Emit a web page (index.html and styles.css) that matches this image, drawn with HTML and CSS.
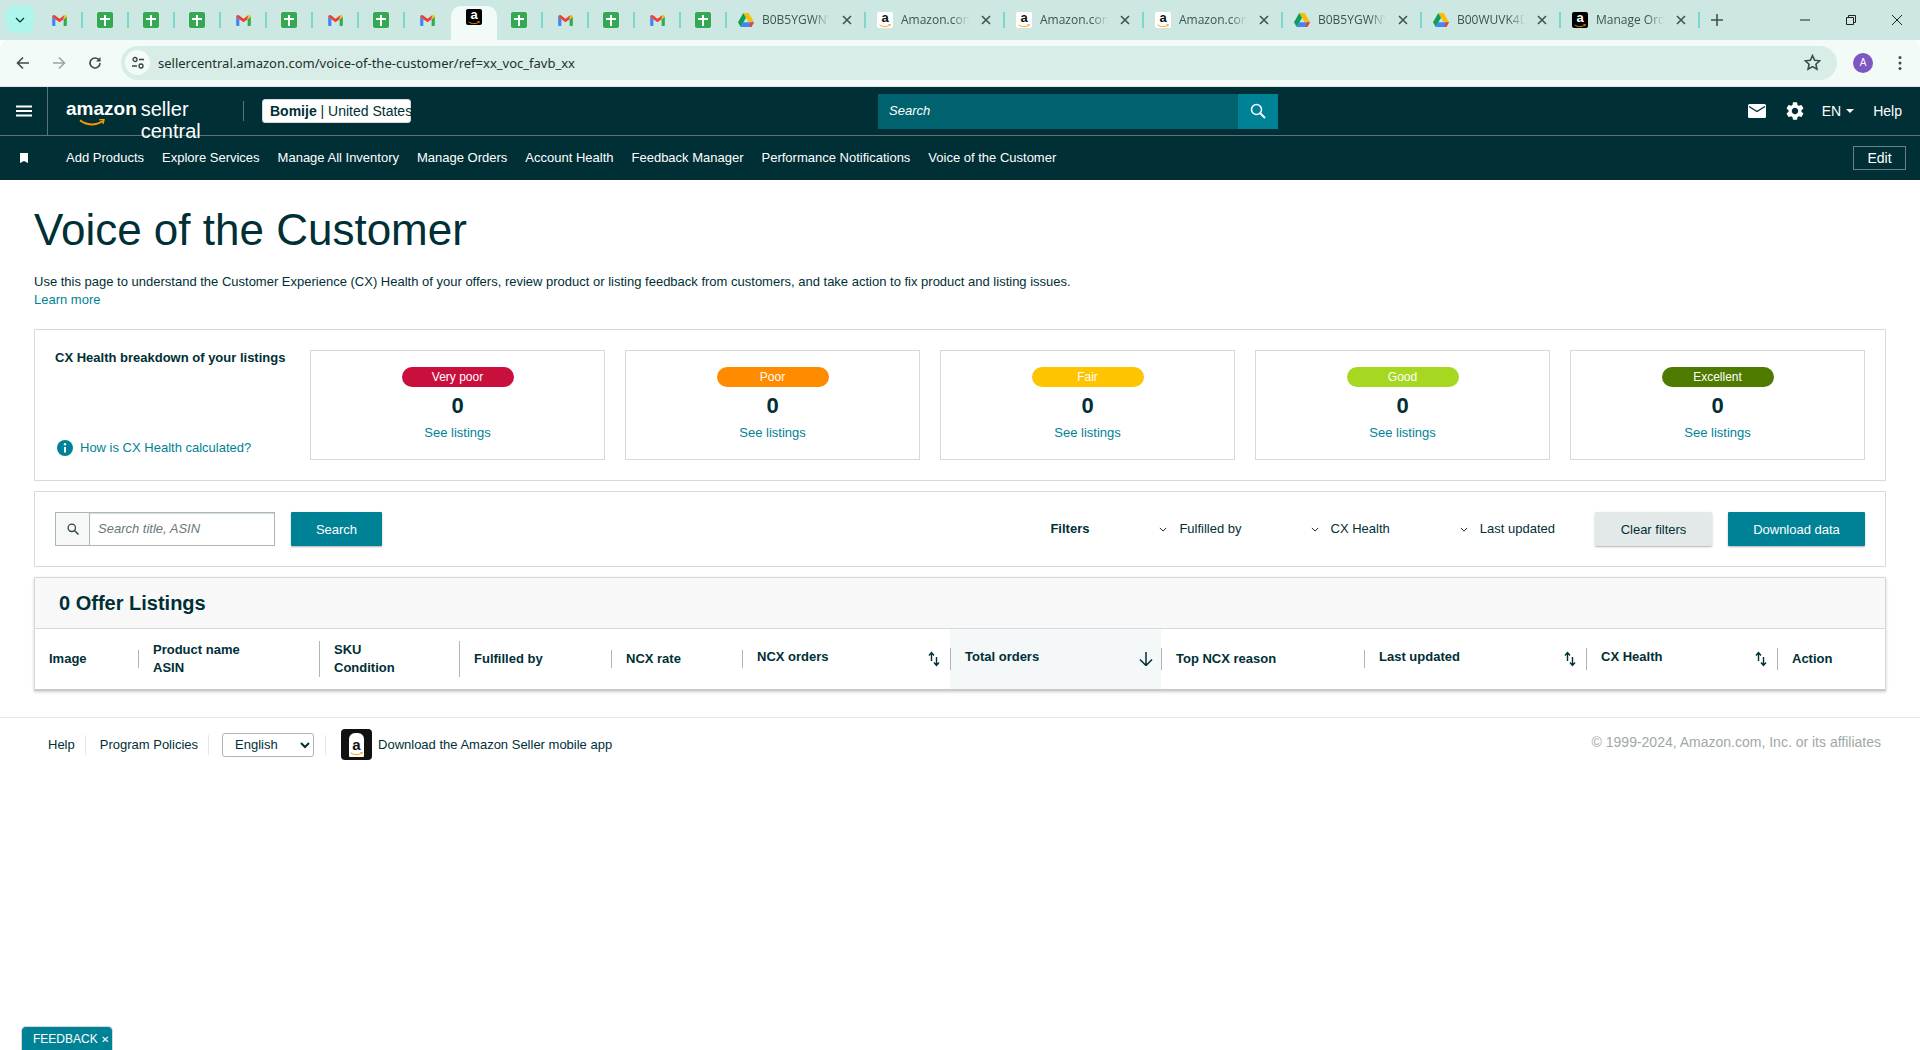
FILE: index.html
```html
<!DOCTYPE html>
<html lang="en">
<head>
    <meta charset="UTF-8">
    <title>Voice of the Customer</title>
    <link rel="stylesheet" href="styles.css">
</head>
<body>
    <svg class="defs" width="0" height="0">
        <symbol id="gmail" viewBox="0 0 16 12">
            <path fill="#4285f4" d="M0 2v8.8C0 11.5.5 12 1.2 12h2.3V4.6z"/>
            <path fill="#34a853" d="M12.5 4.6V12h2.3c.7 0 1.2-.5 1.2-1.2V2z"/>
            <path fill="#ea4335" d="M0 2C0 .4 1.8-.5 3 .4l5 3.8L13 .4l-.5 4.2L8 8 3.500 4.600 0 2z"/>
            <path fill="#fbbc04" d="M13 .4c1.200-.9 3 0 3 1.600l-3.500 2.600z"/>
        </symbol>
        <symbol id="sheet" viewBox="0 0 16 16">
            <rect width="16" height="16" rx="2" fill="#34a853"/>
            <path fill="#fff" d="M7 3h2v3h4v2H9v6H7V8H3V6h4z"/>
        </symbol>
        <symbol id="drive" viewBox="0 0 16 14">
            <path fill="#fbbc04" d="M5.300 0h5.400L16 9.300h-5.400z"/>
            <path fill="#0f9d58" d="M5.300 0 0 9.300 2.700 14 8 4.700z"/>
            <path fill="#4285f4" d="M5.300 9.300H16L13.300 14H2.700z"/>
            <path fill="#ea4335" d="M13 9.300h3L13.300 14H11z"/>
        </symbol>
        <symbol id="close" viewBox="0 0 10 10">
            <path d="M1 1l8 8M9 1l-8 8" stroke="#3f5350" stroke-width="1.600" fill="none"/>
        </symbol>
        <symbol id="chevron" viewBox="0 0 10 6">
            <path d="M1 1l4 4 4-4" stroke="#002f36" stroke-width="1.200" fill="none"/>
        </symbol>
        <symbol id="sort" viewBox="0 0 12 16">
            <path d="M3.500 10V2M1 4.500l2.500-3 2.500 3" stroke="#002f36" stroke-width="1.400" fill="none"/>
            <path d="M8.500 6v8M6 11.500l2.500 3 2.500-3" stroke="#002f36" stroke-width="1.400" fill="none"/>
        </symbol>
        <symbol id="smile" viewBox="0 0 20 6">
            <path d="M1 1c5 4 12 4 17 .5" stroke="#f90" stroke-width="1.500" fill="none"/>
            <path d="M15.500 .6l3.500-.4-.8 3.400" stroke="#f90" stroke-width="1.200" fill="none"/>
        </symbol>
    </svg>

    <div class="tabstrip">
        <div class="tabstrip__menu"><svg class="icon-10"><use href="#chevron"/></svg></div>
        <div class="tab"><svg class="fav-gmail"><use href="#gmail"/></svg></div>
        <div class="tab"><svg class="fav"><use href="#sheet"/></svg></div>
        <div class="tab"><svg class="fav"><use href="#sheet"/></svg></div>
        <div class="tab"><svg class="fav"><use href="#sheet"/></svg></div>
        <div class="tab"><svg class="fav-gmail"><use href="#gmail"/></svg></div>
        <div class="tab"><svg class="fav"><use href="#sheet"/></svg></div>
        <div class="tab"><svg class="fav-gmail"><use href="#gmail"/></svg></div>
        <div class="tab"><svg class="fav"><use href="#sheet"/></svg></div>
        <div class="tab tab--noline"><svg class="fav-gmail"><use href="#gmail"/></svg></div>
        <div class="tab tab--active"><span class="fav-a fav-a--black">a<svg class="fav-a__smile"><use href="#smile"/></svg></span></div>
        <div class="tab"><svg class="fav"><use href="#sheet"/></svg></div>
        <div class="tab"><svg class="fav-gmail"><use href="#gmail"/></svg></div>
        <div class="tab"><svg class="fav"><use href="#sheet"/></svg></div>
        <div class="tab"><svg class="fav-gmail"><use href="#gmail"/></svg></div>
        <div class="tab"><svg class="fav"><use href="#sheet"/></svg></div>
        <div class="tab tab--wide"><svg class="fav-drive"><use href="#drive"/></svg><span class="tab__title">B0B5YGWNY9</span><svg class="tab__close"><use href="#close"/></svg></div>
        <div class="tab tab--wide"><span class="fav-a">a<svg class="fav-a__smile"><use href="#smile"/></svg></span><span class="tab__title">Amazon.com</span><svg class="tab__close"><use href="#close"/></svg></div>
        <div class="tab tab--wide"><span class="fav-a">a<svg class="fav-a__smile"><use href="#smile"/></svg></span><span class="tab__title">Amazon.com</span><svg class="tab__close"><use href="#close"/></svg></div>
        <div class="tab tab--wide"><span class="fav-a">a<svg class="fav-a__smile"><use href="#smile"/></svg></span><span class="tab__title">Amazon.com</span><svg class="tab__close"><use href="#close"/></svg></div>
        <div class="tab tab--wide"><svg class="fav-drive"><use href="#drive"/></svg><span class="tab__title">B0B5YGWNY9</span><svg class="tab__close"><use href="#close"/></svg></div>
        <div class="tab tab--wide"><svg class="fav-drive"><use href="#drive"/></svg><span class="tab__title">B00WUVK4DU</span><svg class="tab__close"><use href="#close"/></svg></div>
        <div class="tab tab--wide"><span class="fav-a fav-a--black">a<svg class="fav-a__smile"><use href="#smile"/></svg></span><span class="tab__title">Manage Orders</span><svg class="tab__close"><use href="#close"/></svg></div>
        <svg class="tabstrip__new" viewBox="0 0 12 12"><path d="M6 0v12M0 6h12" stroke="#3f5350" stroke-width="1.600"/></svg>
        <div class="winctl">
            <svg class="winctl__btn" viewBox="0 0 12 12"><path d="M1 6h10" stroke="#222" stroke-width="1"/></svg>
            <svg class="winctl__btn" viewBox="0 0 12 12"><path d="M1.500 3.500h7v7h-7zM3.500 3.500v-2h7v7h-2" stroke="#222" stroke-width="1" fill="none"/></svg>
            <svg class="winctl__btn" viewBox="0 0 12 12"><path d="M1 1l10 10M11 1L1 11" stroke="#222" stroke-width="1"/></svg>
        </div>
    </div>

    <div class="toolbar">
        <svg class="toolbar__btn" viewBox="0 0 14 14"><path d="M13 7H2M7 1.500 1.500 7 7 12.500" stroke="#3f4b49" stroke-width="1.600" fill="none"/></svg>
        <svg class="toolbar__btn toolbar__btn--gap" viewBox="0 0 14 14"><path d="M1 7h11M7 1.500 12.500 7 7 12.500" stroke="#9aa5a3" stroke-width="1.600" fill="none"/></svg>
        <svg class="toolbar__btn toolbar__btn--gap" viewBox="0 0 14 14"><path d="M12 7a5 5 0 1 1-1.500-3.600L12 5" stroke="#3f4b49" stroke-width="1.600" fill="none"/><path d="M12.500 1v4.500H8z" fill="#3f4b49"/></svg>
        <div class="omnibox">
            <span class="omnibox__site">
                <svg viewBox="0 0 14 14" width="14" height="14"><circle cx="4" cy="3.500" r="2" stroke="#33413f" stroke-width="1.300" fill="none"/><path d="M8 3.500h5M1 10h5" stroke="#33413f" stroke-width="1.300"/><circle cx="10" cy="10" r="2" stroke="#33413f" stroke-width="1.300" fill="none"/></svg>
            </span>
            <span class="omnibox__url">sellercentral.amazon.com/voice-of-the-customer/ref=xx_voc_favb_xx</span>
            <svg class="omnibox__star" viewBox="0 0 16 16"><path d="M8 1.500l2 4.400 4.800.5-3.600 3.200 1 4.700L8 11.900l-4.200 2.400 1-4.700L1.200 6.400 6 5.900z" stroke="#3f4b49" stroke-width="1.500" fill="none"/></svg>
        </div>
        <span class="toolbar__avatar">A</span>
        <svg class="toolbar__dots" viewBox="0 0 4 16"><circle cx="2" cy="2.500" r="1.500"/><circle cx="2" cy="8" r="1.500"/><circle cx="2" cy="13.500" r="1.500"/></svg>
    </div>

    <header class="topbar">
        <div class="topbar__menu">
            <svg viewBox="0 0 16 12" width="16" height="12"><path d="M0 1.500h16M0 6h16M0 10.500h16" stroke="#fff" stroke-width="1.800"/></svg>
        </div>
        <div class="logo">
            <span class="logo__amazon">amazon<svg class="logo__smile"><use href="#smile"/></svg></span>
            <span class="logo__seller">seller central</span>
        </div>
        <span class="topbar__rule"></span>
        <div class="account"><b>Bomije</b> | United States</div>
        <div class="topsearch">
            <span class="topsearch__text">Search</span>
            <span class="topsearch__btn">
                <svg viewBox="0 0 16 16" width="16" height="16"><circle cx="6.500" cy="6.500" r="5" stroke="#fff" stroke-width="1.500" fill="none"/><path d="M10 10l5 5" stroke="#fff" stroke-width="1.800"/></svg>
            </span>
        </div>
        <div class="topbar__right">
            <svg class="topbar__mail" viewBox="0 0 18 14"><rect width="18" height="14" rx="1.500" fill="#fff"/><path d="M1 2.500l8 5 8-5" stroke="#002f36" stroke-width="1.400" fill="none"/></svg>
            <svg class="topbar__gear" viewBox="2 2 20 20"><path fill="#fff" d="M19.140 12.940c.04-.3.06-.61.06-.94 0-.32-.02-.64-.07-.94l2.030-1.580a.49.49 0 0 0 .12-.61l-1.920-3.320a.488.488 0 0 0-.59-.22l-2.390.96c-.5-.38-1.030-.7-1.620-.94l-.36-2.540a.484.484 0 0 0-.48-.41h-3.840c-.24 0-.43.17-.47.41l-.36 2.540c-.59.24-1.130.57-1.620.94l-2.390-.96c-.22-.08-.47 0-.59.22L2.740 8.870c-.12.21-.08.47.12.61l2.030 1.580c-.05.3-.09.63-.09.94s.02.64.07.94l-2.030 1.580a.49.49 0 0 0-.12.61l1.920 3.320c.12.22.37.29.59.22l2.390-.96c.5.38 1.030.7 1.620.94l.36 2.540c.05.24.24.41.48.41h3.840c.24 0 .44-.17.47-.41l.36-2.540c.59-.24 1.130-.56 1.620-.94l2.390.96c.22.08.47 0 .59-.22l1.920-3.320c.12-.22.07-.47-.12-.61l-2.010-1.580zM12 15.600c-1.980 0-3.600-1.620-3.600-3.600s1.620-3.600 3.600-3.600 3.600 1.620 3.600 3.600-1.620 3.600-3.600 3.600z"/></svg>
            <span class="topbar__lang">EN</span>
            <span class="topbar__caret"></span>
            <span class="topbar__help">Help</span>
        </div>
    </header>

    <nav class="navbar">
        <svg class="navbar__mark" viewBox="0 0 8 10"><path fill="#fff" d="M0 0h8v10L4 8 0 10z"/></svg>
        <a class="navbar__item">Add Products</a>
        <a class="navbar__item">Explore Services</a>
        <a class="navbar__item">Manage All Inventory</a>
        <a class="navbar__item">Manage Orders</a>
        <a class="navbar__item">Account Health</a>
        <a class="navbar__item">Feedback Manager</a>
        <a class="navbar__item">Performance Notifications</a>
        <a class="navbar__item">Voice of the Customer</a>
        <span class="navbar__edit">Edit</span>
    </nav>

    <main class="page">
        <h1 class="page__title">Voice of the Customer</h1>
        <p class="page__intro">Use this page to understand the Customer Experience (CX) Health of your offers, review product or listing feedback from customers, and take action to fix product and listing issues.<br><a class="link">Learn more</a></p>

        <section class="box health">
            <div class="health__side">
                <strong class="health__heading">CX Health breakdown of your listings</strong>
                <div class="health__how">
                    <svg viewBox="0 0 16 16" width="16" height="16"><circle cx="8" cy="8" r="8" fill="#008296"/><circle cx="8" cy="4.300" r="1.200" fill="#fff"/><path d="M8 7v5.500" stroke="#fff" stroke-width="2"/></svg>
                    <a class="link">How is CX Health calculated?</a>
                </div>
            </div>
            <div class="score">
                <span class="score__pill score__pill--verypoor">Very poor</span>
                <span class="score__num">0</span>
                <a class="link">See listings</a>
            </div>
            <div class="score">
                <span class="score__pill score__pill--poor">Poor</span>
                <span class="score__num">0</span>
                <a class="link">See listings</a>
            </div>
            <div class="score">
                <span class="score__pill score__pill--fair">Fair</span>
                <span class="score__num">0</span>
                <a class="link">See listings</a>
            </div>
            <div class="score">
                <span class="score__pill score__pill--good">Good</span>
                <span class="score__num">0</span>
                <a class="link">See listings</a>
            </div>
            <div class="score">
                <span class="score__pill score__pill--excellent">Excellent</span>
                <span class="score__num">0</span>
                <a class="link">See listings</a>
            </div>
        </section>

        <section class="box filters">
            <div class="searchbox">
                <span class="searchbox__icon">
                    <svg viewBox="0 0 12 12" width="12" height="12"><circle cx="4.800" cy="4.800" r="3.700" stroke="#33474b" stroke-width="1.300" fill="none"/><path d="M7.500 7.500l4 4" stroke="#33474b" stroke-width="1.500"/></svg>
                </span>
                <span class="searchbox__text">Search title, ASIN</span>
            </div>
            <button class="btn btn--primary btn--search">Search</button>
            <strong class="filters__label">Filters</strong>
            <span class="filter filter--fulfilled"><svg class="filter__chevron"><use href="#chevron"/></svg>Fulfilled by</span>
            <span class="filter filter--health"><svg class="filter__chevron"><use href="#chevron"/></svg>CX Health</span>
            <span class="filter filter--updated"><svg class="filter__chevron"><use href="#chevron"/></svg>Last updated</span>
            <button class="btn btn--clear">Clear filters</button>
            <button class="btn btn--primary btn--download">Download data</button>
        </section>

        <section class="listings">
            <h2 class="listings__head">0 Offer Listings</h2>
            <div class="thead">
                <div class="th th--image"><span class="th__text">Image</span></div>
                <div class="th th--name"><i class="th__rule"></i><span class="th__text">Product name<br>ASIN</span></div>
                <div class="th th--sku"><i class="th__rule th__rule--tall"></i><span class="th__text">SKU<br>Condition</span></div>
                <div class="th th--fulfilled"><i class="th__rule th__rule--tall"></i><span class="th__text">Fulfilled by</span></div>
                <div class="th th--rate"><i class="th__rule"></i><span class="th__text">NCX rate</span></div>
                <div class="th th--orders"><i class="th__rule"></i><span class="th__text th__text--raised">NCX orders</span><svg class="th__sort"><use href="#sort"/></svg></div>
                <div class="th th--total"><i class="th__rule th__rule--mid"></i><span class="th__text th__text--raised">Total orders</span>
                    <svg class="th__down" viewBox="0 0 14 14"><path d="M7 0v13M1 7.500 7 13.500l6-6" stroke="#002f36" stroke-width="1.500" fill="none"/></svg></div>
                <div class="th th--reason"><i class="th__rule th__rule--mid"></i><span class="th__text">Top NCX reason</span></div>
                <div class="th th--updated"><i class="th__rule"></i><span class="th__text th__text--raised">Last updated</span><svg class="th__sort"><use href="#sort"/></svg></div>
                <div class="th th--health"><i class="th__rule th__rule--mid"></i><span class="th__text th__text--raised">CX Health</span><svg class="th__sort"><use href="#sort"/></svg></div>
                <div class="th th--action"><i class="th__rule th__rule--mid"></i><span class="th__text">Action</span></div>
            </div>
        </section>
    </main>

    <footer class="footer">
        <a class="footer__link">Help</a>
        <i class="footer__rule"></i>
        <a class="footer__link">Program Policies</a>
        <i class="footer__rule"></i>
        <select class="footer__lang"><option>English</option></select>
        <i class="footer__rule"></i>
        <span class="appicon">
            <span class="appicon__tag">a<svg class="appicon__smile"><use href="#smile"/></svg></span>
        </span>
        <a class="footer__app">Download the Amazon Seller mobile app</a>
        <span class="footer__copy">© 1999-2024, Amazon.com, Inc. or its affiliates</span>
    </footer>

    <div class="feedback">FEEDBACK <span class="feedback__x">✕</span></div>
</body>
</html>
```

FILE: styles.css
```css
* {
    box-sizing: border-box;
}

html, body {
    margin: 0;
    height: 100%;
}

body {
    background-color: #fff;
    color: #002f36;
    font-family: 'Liberation Sans', Arial, sans-serif;
    font-size: 13px;
    line-height: 18px;
    overflow: hidden;
}

.defs {
    position: absolute;
}

.link {
    color: #008296;
}

/* browser chrome */
.tabstrip {
    display: flex;
    align-items: flex-start;
    height: 40px;
    padding-left: 6px;
    background-color: #cde8e2;
    font-family: 'Open Sans', sans-serif;
}

.tabstrip__menu {
    display: flex;
    align-items: center;
    justify-content: center;
    width: 28px;
    height: 27px;
    margin-top: 6px;
    margin-right: 3px;
    border-radius: 8px;
    background-color: #aef5ec;
}

.icon-10 {
    width: 10px;
    height: 6px;
}

.tab {
    display: flex;
    align-items: center;
    justify-content: center;
    flex: none;
    width: 46px;
    height: 16px;
    margin-top: 12px;
    border-right: 2px solid #7dd8cc;
}

.tab--noline {
    border-right-color: transparent;
}

.tab--active {
    width: 46px;
    height: 34px;
    margin-top: 6px;
    border-right: none;
    border-radius: 10px 10px 0 0;
    background-color: #f3fbf8;
    padding-bottom: 12px;
    margin-right: 0;
}

.tab--wide {
    justify-content: flex-start;
    width: 139px;
    padding-left: 11px;
}

.tab__title {
    flex: none;
    width: 68px;
    margin-left: 8px;
    overflow: hidden;
    white-space: nowrap;
    color: #3f5350;
    font-size: 12px;
    line-height: 16px;
    -webkit-mask-image: linear-gradient(to right, #000 75%, transparent 100%);
    mask-image: linear-gradient(to right, #000 75%, transparent 100%);
}

.tab__close {
    flex: none;
    width: 10px;
    height: 10px;
    margin-left: 12px;
}

.fav {
    width: 16px;
    height: 16px;
}

.fav-gmail {
    width: 15px;
    height: 11px;
}

.fav-drive {
    width: 16px;
    height: 14px;
}

.fav-a {
    display: block;
    position: relative;
    flex: none;
    width: 16px;
    height: 16px;
    border-radius: 2px;
    background-color: #fff;
    color: #111;
    font-family: 'Liberation Sans', sans-serif;
    font-weight: bold;
    font-size: 13px;
    line-height: 12px;
    text-align: center;
}

.fav-a--black {
    background-color: #000;
    color: #fff;
}

.fav-a__smile {
    position: absolute;
    left: 2px;
    bottom: 0;
    width: 12px;
    height: 4px;
}

.tabstrip__new {
    flex: none;
    width: 12px;
    height: 12px;
    margin-top: 14px;
    margin-left: 11px;
}

.winctl {
    display: flex;
    gap: 34px;
    margin-left: auto;
    margin-top: 14px;
    margin-right: 17px;
}

.winctl__btn {
    width: 12px;
    height: 12px;
}

.toolbar {
    display: flex;
    align-items: center;
    height: 47px;
    padding: 0 0 1px 16px;
    border-radius: 8px 8px 0 0;
    border-bottom: 1px solid #dfe8e6;
    background-color: #f3fbf8;
    margin-top: 0;
}

.toolbar__btn {
    flex: none;
    width: 14px;
    height: 14px;
}

.toolbar__btn--gap {
    margin-left: 22px;
}

.omnibox {
    display: flex;
    align-items: center;
    flex: none;
    width: 1716px;
    height: 34px;
    margin-left: 19px;
    padding-left: 4px;
    border-radius: 17px;
    background-color: #d9ede8;
}

.omnibox__site {
    display: flex;
    align-items: center;
    justify-content: center;
    width: 25px;
    height: 25px;
    border-radius: 50%;
    background-color: #f3fbf8;
}

.omnibox__url {
    margin-left: 8px;
    font-family: 'Noto Sans', sans-serif;
    font-size: 13px;
    color: #23302e;
}

.omnibox__star {
    width: 17px;
    height: 17px;
    margin-left: auto;
    margin-right: 16px;
}

.toolbar__avatar {
    flex: none;
    width: 20px;
    height: 20px;
    margin-left: 16px;
    border-radius: 50%;
    background-color: #7e57c2;
    color: #fff;
    font-size: 10px;
    line-height: 20px;
    text-align: center;
}

.toolbar__dots {
    flex: none;
    width: 4px;
    height: 16px;
    margin-left: 25px;
    fill: #3f4b49;
}

/* seller central header */
.topbar {
    display: flex;
    align-items: center;
    height: 49px;
    border-bottom: 1px solid #5f7376;
    background-color: #002f36;
    color: #fff;
}

.topbar__menu {
    display: flex;
    align-items: center;
    justify-content: center;
    flex: none;
    width: 48px;
    height: 48px;
    border-right: 1px solid #5f7376;
}

.logo {
    display: flex;
    flex: none;
    width: 177px;
    margin-left: 18px;
    height: 26px;
    font-family: 'Liberation Sans Narrow', 'Liberation Sans', sans-serif;
    color: #fff;
}

.logo__amazon {
    position: relative;
    font-weight: bold;
    font-size: 19px;
    line-height: 22px;
}

.logo__smile {
    position: absolute;
    left: 10px;
    bottom: -3px;
    width: 32px;
    height: 8px;
}

.logo__seller {
    margin-left: 4px;
    font-size: 20px;
    line-height: 22px;
}

.topbar__rule {
    flex: none;
    width: 1px;
    height: 20px;
    background-color: #5f7376;
}

.account {
    flex: none;
    width: 149px;
    height: 24px;
    margin-left: 18px;
    padding-left: 7px;
    border: 1px solid #d5dbdb;
    border-radius: 3px;
    background-color: #fff;
    color: #002f36;
    font-size: 14px;
    line-height: 22px;
    white-space: nowrap;
}

.topsearch {
    display: flex;
    flex: none;
    width: 400px;
    height: 35px;
    margin-left: 467px;
    background-color: #00626f;
}

.topsearch__text {
    flex: 1;
    padding-left: 11px;
    font-style: italic;
    font-size: 13px;
    line-height: 34px;
}

.topsearch__btn {
    display: flex;
    align-items: center;
    justify-content: center;
    width: 40px;
    background-color: #008296;
}

.topbar__right {
    display: flex;
    align-items: center;
    margin-left: auto;
    padding-right: 18px;
}

.topbar__mail {
    width: 18px;
    height: 14px;
}

.topbar__gear {
    width: 18px;
    height: 18px;
    margin-left: 20px;
}

.topbar__lang {
    margin-left: 18px;
    font-size: 14px;
}

.topbar__caret {
    width: 0;
    height: 0;
    margin-left: 5px;
    border-left: 4px solid transparent;
    border-right: 4px solid transparent;
    border-top: 4px solid #fff;
}

.topbar__help {
    margin-left: 19px;
    font-size: 14px;
}

.navbar {
    display: flex;
    align-items: center;
    height: 44px;
    background-color: #002f36;
    color: #fff;
}

.navbar__mark {
    flex: none;
    width: 8px;
    height: 10px;
    margin-left: 20px;
    margin-right: 38px;
}

.navbar__item {
    margin-right: 18px;
    font-size: 13px;
    white-space: nowrap;
}

.navbar__edit {
    width: 53px;
    height: 24px;
    margin-left: auto;
    margin-right: 14px;
    border: 1px solid #6c8083;
    font-size: 14px;
    line-height: 22px;
    text-align: center;
}

/* page body */
.page {
    padding: 24px 34px 0;
}

.page__title {
    margin: 0;
    color: #002f36;
    font-size: 44px;
    font-weight: normal;
    line-height: 52px;
}

.page__intro {
    margin: 17px 0 20px;
}

.box {
    border: 1px solid #d5dbdb;
    background-color: #fff;
}

.health {
    display: flex;
    gap: 20px;
    height: 152px;
    padding: 20px;
    margin-bottom: 10px;
}

.health__side {
    display: flex;
    flex: none;
    flex-direction: column;
    justify-content: space-between;
    width: 235px;
    padding-bottom: 1px;
}

.health__heading {
    line-height: 16px;
}

.health__how {
    display: flex;
    align-items: center;
    gap: 7px;
    padding-left: 2px;
    padding-bottom: 2px;
}

.score {
    display: flex;
    flex: 1;
    flex-direction: column;
    align-items: center;
    padding-top: 16px;
    border: 1px solid #d5dbdb;
}

.score__pill {
    width: 112px;
    height: 20px;
    border-radius: 10px;
    color: #fff;
    font-size: 12px;
    line-height: 20px;
    text-align: center;
}

.score__pill--verypoor {
    background-color: #c90f3c;
}

.score__pill--poor {
    background-color: #ff8c00;
}

.score__pill--fair {
    background-color: #ffc400;
}

.score__pill--good {
    background-color: #a6d821;
}

.score__pill--excellent {
    background-color: #4f7a00;
}

.score__num {
    margin-top: 5px;
    font-size: 22px;
    font-weight: bold;
    line-height: 28px;
}

.score .link {
    margin-top: 4px;
}

.filters {
    display: flex;
    align-items: center;
    height: 76px;
    padding: 0 20px;
    margin-bottom: 10px;
}

.searchbox {
    display: flex;
    flex: none;
    width: 220px;
    height: 34px;
    border: 1px solid #aab7b8;
    box-shadow: inset 0 1px 1px #d5dbdb;
}

.searchbox__icon {
    display: flex;
    align-items: center;
    justify-content: center;
    flex: none;
    width: 34px;
    border-right: 1px solid #aab7b8;
    background-color: #f7f8f8;
}

.searchbox__text {
    padding-left: 8px;
    color: #6c7778;
    font-style: italic;
    line-height: 32px;
}

.btn {
    flex: none;
    height: 34px;
    padding: 0;
    border: none;
    border-radius: 1px;
    font-family: inherit;
    font-size: 13px;
    box-shadow: 0 1px 2px rgba(0, 0, 0, 0.3);
}

.btn--primary {
    background-color: #008296;
    color: #fff;
}

.btn--search {
    width: 91px;
    margin-left: 16px;
}

.btn--clear {
    width: 117px;
    margin-left: 40px;
    background-color: #e3e9e9;
    color: #002f36;
}

.btn--download {
    width: 137px;
    margin-left: 16px;
}

.filters__label {
    margin-left: auto;
    font-weight: bold;
}

.filter {
    display: flex;
    align-items: center;
    flex: none;
}

.filter__chevron {
    width: 8px;
    height: 5px;
    margin-right: 12px;
}

.filter--fulfilled {
    margin-left: 70px;
}

.filter--health {
    margin-left: 69px;
}

.filter--updated {
    margin-left: 70px;
}

.listings {
    height: 114px;
    border: 1px solid #d5dbdb;
    border-bottom: 2px solid #c6cccc;
    box-shadow: 0 1px 3px rgba(0, 0, 0, 0.2);
}

.listings__head {
    height: 51px;
    margin: 0;
    padding-left: 24px;
    border-bottom: 1px solid #d5dbdb;
    background-color: #f8f8f8;
    font-size: 20px;
    font-weight: bold;
    line-height: 50px;
}

.thead {
    display: flex;
    height: 60px;
}

.th {
    display: flex;
    align-items: center;
    flex: none;
    font-weight: bold;
}

.th__text {
    padding-left: 14px;
    white-space: nowrap;
}

.th__text--raised {
    padding-bottom: 4px;
}

.th__rule {
    flex: none;
    width: 1px;
    height: 18px;
    background-color: #aab7b8;
}

.th__rule--tall {
    height: 36px;
}

.th__rule--mid {
    height: 22px;
}

.th__sort {
    flex: none;
    width: 12px;
    height: 16px;
    margin-left: auto;
    margin-right: 10px;
}

.th__down {
    flex: none;
    width: 14px;
    height: 14px;
    margin-left: auto;
    margin-right: 8px;
}

.th--image {
    width: 103px;
}

.th--name {
    width: 181px;
}

.th--sku {
    width: 140px;
}

.th--fulfilled {
    width: 152px;
}

.th--rate {
    width: 131px;
}

.th--orders {
    width: 208px;
}

.th--total {
    width: 211px;
    background-color: #f4f8f8;
}

.th--reason {
    width: 203px;
}

.th--updated {
    width: 222px;
}

.th--health {
    width: 191px;
}

.th--action {
    flex: 1;
}

/* footer */
.footer {
    display: flex;
    align-items: center;
    height: 54px;
    margin-top: 26px;
    padding: 0 39px 0 48px;
    border-top: 1px solid #e7e9e9;
}

.footer__link {
    white-space: nowrap;
}

.footer__rule {
    flex: none;
    width: 1px;
    height: 20px;
    margin: 0 14px 0 10px;
    background-color: #e7e9e9;
}

.footer__lang {
    flex: none;
    width: 92px;
    height: 24px;
    margin-left: -1px;
    margin-right: 1px;
    padding-left: 8px;
    border: 1px solid #aab7b8;
    border-radius: 3px;
    background-color: #fff;
    color: #002f36;
    font-family: inherit;
    font-size: 13px;
}

.appicon {
    display: flex;
    align-items: center;
    justify-content: center;
    flex: none;
    width: 31px;
    height: 31px;
    margin-left: 1px;
    border-radius: 4px;
    background-color: #111;
}

.appicon__tag {
    position: relative;
    width: 15px;
    height: 24px;
    border-radius: 6px 6px 1px 1px;
    background-color: #fff;
    color: #111;
    font-size: 15px;
    font-weight: bold;
    line-height: 24px;
    text-align: center;
}

.appicon__smile {
    position: absolute;
    left: 1px;
    bottom: 1px;
    width: 13px;
    height: 4px;
}

.footer__app {
    margin-left: 6px;
    white-space: nowrap;
}

.footer__copy {
    margin-left: auto;
    padding-bottom: 6px;
    color: #a1a8a8;
    font-size: 14px;
    white-space: nowrap;
}

.feedback {
    position: fixed;
    left: 21px;
    bottom: 0;
    width: 92px;
    height: 24px;
    padding-left: 11px;
    border: 1px solid #d5dbdb;
    border-bottom: none;
    border-radius: 5px 5px 0 0;
    background-color: #008296;
    color: #fff;
    font-size: 12px;
    line-height: 24px;
    white-space: nowrap;
}

.feedback__x {
    font-size: 10px;
}
```
